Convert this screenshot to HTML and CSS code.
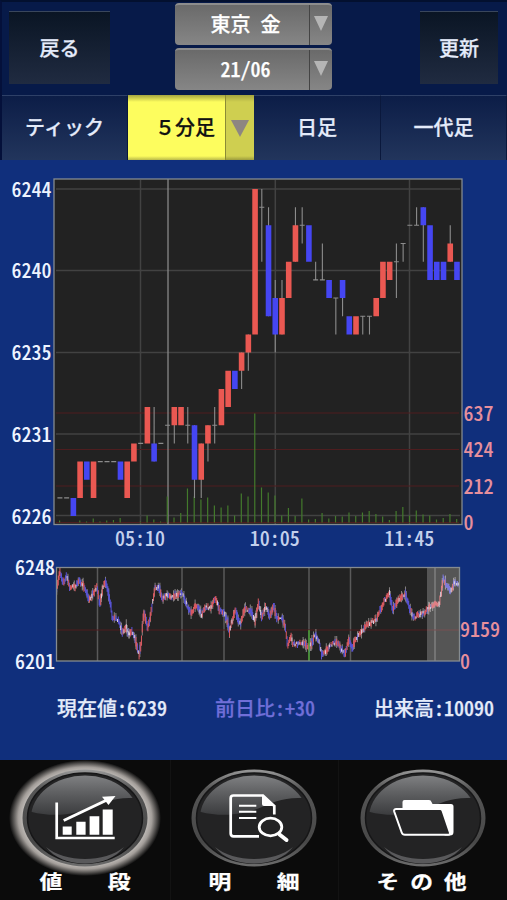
FILE: index.html
```html
<!DOCTYPE html>
<html lang="ja">
<head>
<meta charset="utf-8">
<title>東京 金 21/06</title>
<link rel="stylesheet" href="styles.css">
</head>
<body>
<div class="app">
  <header class="header">
    <button class="key key-back">戻る</button>
    <div class="selects">
      <button class="select"><span class="select-text">東京&nbsp;金</span><span class="select-arrow"><i class="tri"></i></span></button>
      <button class="select"><span class="select-text">21/06</span><span class="select-arrow"><i class="tri"></i></span></button>
    </div>
    <button class="key key-refresh">更新</button>
  </header>

  <nav class="tabs">
    <button class="tab">ティック</button>
    <button class="tab tab-active"><span class="tab-text">５分足</span><span class="tab-arrow"><i class="tri"></i></span></button>
    <button class="tab">日足</button>
    <button class="tab">一代足</button>
  </nav>

  <main class="charts">
    <svg class="chart-main" viewBox="0 160 507 390">
      <rect class="plot" x="54" y="179" width="408" height="345.500"/>
      <path class="grid" d="M56 189H460M56 270.500H460M56 352.500H460M56 434H460M56 515.500H460M140.500 180V524M275.300 180V524M409.500 180V524"/>
      <path class="volgrid" d="M56 413H459M56 449.500H459M56 486H459M56 522.500H459"/>
      <path class="cross" d="M168 179V524"/>
      <path id="vol" class="vol"/>
      <path id="wick" class="wick"/>
      <path id="up" class="up"/>
      <path id="down" class="down"/>
      <rect class="frame" x="54" y="179" width="408" height="345.500"/>
      <g class="price">
        <text x="11.500" y="196.500">6244</text>
        <text x="11.500" y="278.200">6240</text>
        <text x="11.500" y="360">6235</text>
        <text x="11.500" y="441.700">6231</text>
        <text x="11.500" y="523.500">6226</text>
      </g>
      <g class="volume">
        <text x="463.500" y="420.700">637</text>
        <text x="463.500" y="457.300">424</text>
        <text x="463.500" y="494">212</text>
        <text x="463.500" y="530.200">0</text>
      </g>
      <g class="time">
        <text x="115" y="545.700">05:10</text>
        <text x="249.700" y="545.700">10:05</text>
        <text x="384.300" y="545.700">11:45</text>
      </g>
    </svg>

    <svg class="chart-mini" viewBox="0 550 507 130">
      <rect class="plot" x="56.500" y="567.500" width="403" height="93.500"/>
      <path class="grid grid-mini" d="M97.500 568V661M182 568V661M224 568V661M309 568V661M350.500 568V661M435 568V661"/>
      <path class="volgrid" d="M57 630H459"/>
      <path id="m0" class="m-wick"/>
      <path id="m1" class="m-down"/>
      <path id="m2" class="m-up"/>
      <path id="m3" class="m-flat"/>
      <path class="spike" d="M309 630V661"/>
      <rect class="window" x="427" y="568" width="32.500" height="93"/>
      <rect class="frame" x="56.500" y="567.500" width="403" height="93.500"/>
      <g class="price">
        <text x="15" y="574.700">6248</text>
        <text x="15" y="668.700">6201</text>
      </g>
      <g class="volume">
        <text x="460" y="637.300">9159</text>
        <text x="460" y="668.700">0</text>
      </g>
    </svg>
  </main>

  <section class="summary">
    <span>現在値:6239</span>
    <span class="diff">前日比:+30</span>
    <span>出来高:10090</span>
  </section>

  <footer class="dock">
    <svg class="defs" width="0" height="0">
      <defs>
        <linearGradient id="rim" x1="0" y1="0" x2="0" y2="1"><stop offset="0" stop-color="#999"/><stop offset=".2" stop-color="#555"/><stop offset=".75" stop-color="#484848"/><stop offset="1" stop-color="#6d6d6d"/></linearGradient>
        <linearGradient id="gloss" x1="0" y1="0" x2="0" y2="1"><stop offset=".2" stop-color="#8b8c8e"/><stop offset=".6" stop-color="#606163"/><stop offset="1" stop-color="#3b3c3e"/></linearGradient>
        <radialGradient id="halo"><stop offset=".78" stop-color="#cfcbc7"/><stop offset=".88" stop-color="#a39e9a"/><stop offset="1" stop-color="#a39e9a" stop-opacity="0"/></radialGradient>
        <clipPath id="lens"><ellipse rx="54" ry="42.500"/></clipPath>
        <g id="base">
          <ellipse rx="62.500" ry="48.500" fill="url(#rim)"/>
          <ellipse rx="57.500" ry="45" fill="#232324" stroke="#161617" stroke-width="1.500"/>
          <path d="M-39 29C-20 45 20 45 39 29C23 51-23 51-39 29Z" fill="#59595b"/>
          <path d="M-60-8C-33 1-8-4 8-11S34-21 60-20V-60H-60Z" fill="url(#gloss)" clip-path="url(#lens)"/>
        </g>
      </defs>
    </svg>
    <button class="dock-item">
      <svg class="orb" viewBox="-76 -58 152 116">
        <ellipse rx="76" ry="58" fill="url(#halo)"/>
        <use href="#base"/>
        <path d="M-28.300-15.500V20H29.700" fill="none" stroke="#fff" stroke-width="2.700"/>
        <path d="M-22.300 8.500h9v8.200h-9zM-8.700 3.700h9.300v13h-9.300zM4.600-1.700h9.700v18.400H4.600zM17.700-8.500h10v25.200h-10z" fill="#fff"/>
        <path d="M-21.300 2.500L23-18.500" stroke="#fff" stroke-width="3"/>
        <path d="M30.500-22L17-21.300L23.500-13Z" fill="#fff"/>
      </svg>
      <span class="dock-label">値　　段</span>
    </button>
    <button class="dock-item">
      <svg class="orb" viewBox="-76 -58 152 116">
        <use href="#base"/>
        <path d="M5 18.300H-20.500Q-23.300 18.300-23.300 15.500V-19.700Q-23.300-22.500-20.500-22.500H9L20.300-12V-3.500" fill="none" stroke="#fff" stroke-width="2.700"/>
        <path d="M8-23.500L21.600-12H10Q8-12 8-14Z" fill="#fff"/>
        <path d="M-15-12.300H2.300M-15-6.200H2.300M-15 0H2.300" stroke="#fff" stroke-width="1.900"/>
        <ellipse cx="16.500" cy="9" rx="11.300" ry="8.800" fill="#232324" stroke="#fff" stroke-width="2.800"/>
        <path d="M25.500 16.500L32.500 22" stroke="#fff" stroke-width="4" stroke-linecap="round"/>
      </svg>
      <span class="dock-label">明　　細</span>
    </button>
    <button class="dock-item">
      <svg class="orb" viewBox="-76 -58 152 116">
        <use href="#base"/>
        <path d="M-20.500-8V-16Q-20.500-18-18.500-18H6Q8-18 8.500-16L9.500-14H28Q30.500-14 30.500-11.500V14Q30.500 17.500 27 17.500H22Z" fill="#fff"/>
        <path d="M-26.500-9H17Q19-9 19.600-7L26.800 14.200Q27.600 16.800 25 16.800H-18Q-20.600 16.800-21.300 14.500L-28.800-6.500Q-29.500-9-26.500-9Z" fill="#262627" stroke="#fff" stroke-width="2"/>
      </svg>
      <span class="dock-label dock-label-wide">その他</span>
    </button>
  </footer>
</div>
<script src="chart.js"></script>
</body>
</html>
```
FILE: styles.css
```css
* { box-sizing: border-box; }

body {
  margin: 0;
  background: #102f7c;
  font-family: "Noto Sans CJK JP", sans-serif;
  font-size: 20px;
  color: #e4ebfa;
}

button {
  margin: 0;
  padding: 0;
  border: 0;
  background: none;
  color: inherit;
  font: inherit;
  font-weight: 500;
}

.app {
  width: 507px;
  height: 900px;
  display: flex;
  flex-direction: column;
  overflow: hidden;
  font-feature-settings: "hwid";
  -webkit-text-stroke: 0.25px;
}

.header {
  height: 95px;
  flex: none;
  display: flex;
  align-items: flex-start;
  justify-content: space-between;
  padding: 1px 9px 0 7px;
  background: #071a49;
  border-top: 2px solid #03102f;
  border-left: 2px solid #04103a;
}

.key {
  height: 73px;
  margin-top: 8px;
  background: linear-gradient(#0a1524, #202b41);
  border-top: 1px solid #39465c;
  line-height: 70px;
}
.key-back { width: 101px; }
.key-refresh { width: 78px; }

.selects {
  display: flex;
  flex-direction: column;
  gap: 3px;
  width: 157px;
  margin-left: -23px;
}

.select {
  display: flex;
  height: 42px;
  border-radius: 4px;
  overflow: hidden;
  background: linear-gradient(#6a6a6a, #868686);
  border-top: 2px solid #8d8d8d;
  color: #fff;
  line-height: 38px;
}
.select-text { width: 134px; padding-left: 7px; text-align: center; }
.select-arrow {
  flex: 1;
  display: flex;
  justify-content: center;
  padding-top: 11px;
  border-left: 1px solid #444;
}

.tri {
  width: 14px;
  height: 15px;
  background: #b5b5b5;
  clip-path: polygon(0 0, 100% 0, 50% 100%);
}

.tabs {
  height: 65px;
  flex: none;
  display: grid;
  grid-template-columns: 126px 126px 127px 126px;
  padding-left: 2px;
  background: #04103a;
}
.tab {
  height: 65px;
  padding-bottom: 3px;
  background: linear-gradient(#0c1d47, #22355c);
  border-top: 1px solid #2e4067;
  border-right: 1px solid #0a183c;
  line-height: 61px;
}
.tab-active {
  display: flex;
  padding: 0;
  background: linear-gradient(#a5a53f, #fdfd5e 7px, #fdfd5e 61px, #b9b94a);
  border: 0;
  color: #111;
}
.tab-text {
  width: 97px;
  padding-left: 17px;
  line-height: 64px;
  font-feature-settings: normal;
}
.tab-arrow {
  flex: 1;
  height: 65px;
  display: flex;
  justify-content: center;
  padding-top: 25px;
  border-left: 1px solid #8b8b35;
  background: linear-gradient(#a5a53f, #cfcf50 7px, #cfcf50 61px, #9c9c3e);
}
.tab-arrow .tri { width: 18px; height: 17px; background: #8d8682; }

.charts { flex: none; }
.chart-main, .chart-mini { display: block; width: 507px; overflow: visible; }
.chart-main { height: 390px; }
.chart-mini { height: 130px; }

.plot { fill: #222; }
.frame { fill: none; stroke: #858b90; stroke-width: 1.3; }
.grid { fill: none; stroke: #424242; stroke-width: 1.5; }
.grid-mini { stroke: #5a5a5a; }
.volgrid { fill: none; stroke: #4e1d1f; stroke-width: 1; }
.cross { stroke: #888; stroke-width: 1.3; }
.vol { stroke: #437a2c; stroke-width: 1.2; }
.wick { fill: none; stroke: #8c8c8c; stroke-width: 1.1; }
.up { stroke: #ea5852; stroke-width: 5.6; }
.down { stroke: #4546f2; stroke-width: 5.6; }
.spike { stroke: #46b52c; stroke-width: 1.2; }
.m-wick, .m-up, .m-down, .m-flat { fill: none; stroke-width: 1.05; }
.m-wick { stroke: #858080; }
.m-down { stroke: #5752d2; }
.m-up { stroke: #d6585f; }
.m-flat { stroke: #dac9d8; }
.window { fill: #fff; opacity: .23; }

.price, .volume, .time { font-weight: 500; }
.price { fill: #edf3ff; }
.volume { fill: #e68f9c; }
.time { fill: #c3d0ec; }

.summary {
  flex: 1;
  display: flex;
  justify-content: space-between;
  padding: 13px 13px 0 57px;
  line-height: 30px;
  font-weight: 500;
}
.diff { margin-left: -11px; color: #706fd8; }

.dock {
  height: 140px;
  flex: none;
  display: grid;
  grid-template-columns: repeat(3, 168.5px);
  grid-template-rows: 140px;
  padding-left: 1px;
  background: #0b0b0b;
}
.defs { position: absolute; }
.dock-item {
  height: 140px;
  display: flex;
  flex-direction: column;
  align-items: center;
  justify-content: flex-start;
  color: #fff;
}
.dock-item + .dock-item { border-left: 1px solid #131313; }
.orb { width: 152px; height: 116px; flex: none; }
.dock-label {
  margin-top: -9px;
  font-size: 19px;
  font-weight: 700;
  line-height: 28px;
  white-space: nowrap;
  font-feature-settings: normal;
  transform: scaleX(1.2);
}
.dock-label-wide { letter-spacing: 9px; margin-right: -9px; }
```
FILE: chart.js
```js
// Price levels count down from 6244: kind, body top-bottom, then wick top-bottom
const candles = [
  "f17", "f17", "d17-18", "u15-17", "d15-16", "u15-17", "f15", "f15", "f15", "d15-16",
  "u15-17", "u14-15", "f14", "u12-14", "d14-15:12-15", "f14", "f13", "u12-13:12-14", "u12-13", "f13:12-14",
  "d13-16:13-17", "u14-16:14-17", "u13-14:13-15", "f13:12-14", "u11-13", "u10-12", "d10-11", "u9-10:9-11", "u8-9:8-10", "u0-8",
  "f1:0-4", "d2-7:1-7", "d6-8:5-9", "u6-8:5-8", "u4-6", "u2-4:1-4", "f2:1-3", "d2-4", "f5:4-5", "f5:3-5",
  "d5-6", "f6:6-8", "d5-6:5-7", "d7-8", "u7-8", "f7:7-8", "f7:7-8", "u6-7", "u4-6", "u4-5",
  "f4:3-6", "f3:3-4", "f2", "f2:1-2", "d1-2:1-4", "d2-5", "d4-5", "d4-5", "u3-4:2-4", "d4-5"
];
const volumes = [
  2, 0, 0, 2, 1, 4, 1, 2, 2.5, 4.5, 0, 0, 1, 7, 3, 1, 26, 5, 9.5, 34,
  26, 23, 25, 17, 15, 17, 7, 29, 26, 109, 35, 30, 27, 7, 14.5, 6.5, 24, 3, 3.5, 9.5,
  4, 6.5, 6, 10, 6.5, 10, 11.5, 8.5, 6, 2.5, 11.5, 15.5, 7, 12, 8, 7, 3, 4.5, 8.5, 3.5
];
const y = level => (189 + level * 18.17).toFixed(1);
const paths = { up: "", down: "", wick: "", vol: "" };

candles.forEach((code, i) => {
  const x = 59.9 + i * 6.73;
  const [body, wick] = code.slice(1).split(":");
  const [top, bottom] = body.split("-");
  if (code[0] === "f") paths.wick += `M${x - 2.5} ${y(+top)}h5`;
  else paths[code[0] === "u" ? "up" : "down"] += `M${x} ${y(+top)}V${y(+bottom)}`;
  if (wick) {
    const [high, low] = wick.split("-");
    paths.wick += `M${x} ${y(+high)}V${y(+low)}`;
  }
  if (volumes[i]) paths.vol += `M${x - 0.3} 522.5v${-volumes[i]}`;
});
for (const id in paths) document.getElementById(id).setAttribute("d", paths[id]);

// Overview series, three units per pixel
const overview = [
  170,100, 180,50, 190,85, 200,62, 210,98, 225,95, 237,80, 250,90, 260,115, 270,135, 280,115, 290,95,
  300,150, 307,105, 316,78, 325,110, 332,150, 337,190, 350,190, 360,210, 368,235, 378,215, 388,240,
  395,225, 403,245, 410,275, 417,300, 424,260, 428,200, 433,175, 443,220, 452,180, 460,130, 465,98,
  477,97, 487,130, 500,118, 515,128, 530,118, 547,115, 555,135, 563,160, 575,170, 590,150, 605,180,
  615,155, 630,158, 648,130, 658,165, 673,175, 682,200, 688,230, 697,195, 707,165, 713,190, 722,205,
  735,160, 755,170, 765,200, 775,145, 785,185, 797,155, 810,185, 820,150, 830,185, 845,190, 855,210,
  863,270, 872,245, 880,270, 900,262, 915,268, 927,280, 945,240, 957,262, 965,300, 980,285, 990,270,
  1008,262, 1020,275, 1035,297, 1047,250, 1057,280, 1067,250, 1080,235, 1095,215, 1110,205, 1130,190,
  1145,155, 1155,135, 1168,115, 1178,165, 1190,140, 1200,130, 1215,115, 1225,150, 1240,188, 1255,180,
  1270,175, 1285,160, 1307,145, 1316,150, 1322,120, 1330,70, 1340,90, 1353,108, 1365,80, 1378,90
];
let seed = 7;
const rand = () => (seed = (seed * 16807) % 2147483647) / 2147483647;
const mini = ["", "", "", ""];
let k = 0;
for (let x = 170; x < 1378; x += 2.4) {
  while (overview[k + 2] < x) k += 2;
  const t = (x - overview[k]) / (overview[k + 2] - overview[k]);
  const slope = (overview[k + 3] - overview[k + 1]) / (overview[k + 2] - overview[k]);
  const mid = 555 + (overview[k + 1] + t * (overview[k + 3] - overview[k + 1])) / 3 + (rand() - 0.5) * 3;
  const half = 1.2 + rand() * 1.8 + Math.min(2.5, Math.abs(slope) * 0.5);
  const px = (x / 3).toFixed(1);
  const line = h => `M${px} ${Math.max(568, mid - h).toFixed(1)}V${Math.min(660.5, mid + h).toFixed(1)}`;
  const r = rand();
  const kind = r < 0.18 ? 3 : r < 0.6 + Math.max(-0.25, Math.min(0.25, slope * 0.15)) ? 1 : 2;
  mini[kind] += line(kind === 3 ? half * 0.6 : half);
  if (rand() < 0.35) mini[0] += line(half + rand() * 3.5);
}
mini.forEach((d, i) => document.getElementById("m" + i).setAttribute("d", d));
```
